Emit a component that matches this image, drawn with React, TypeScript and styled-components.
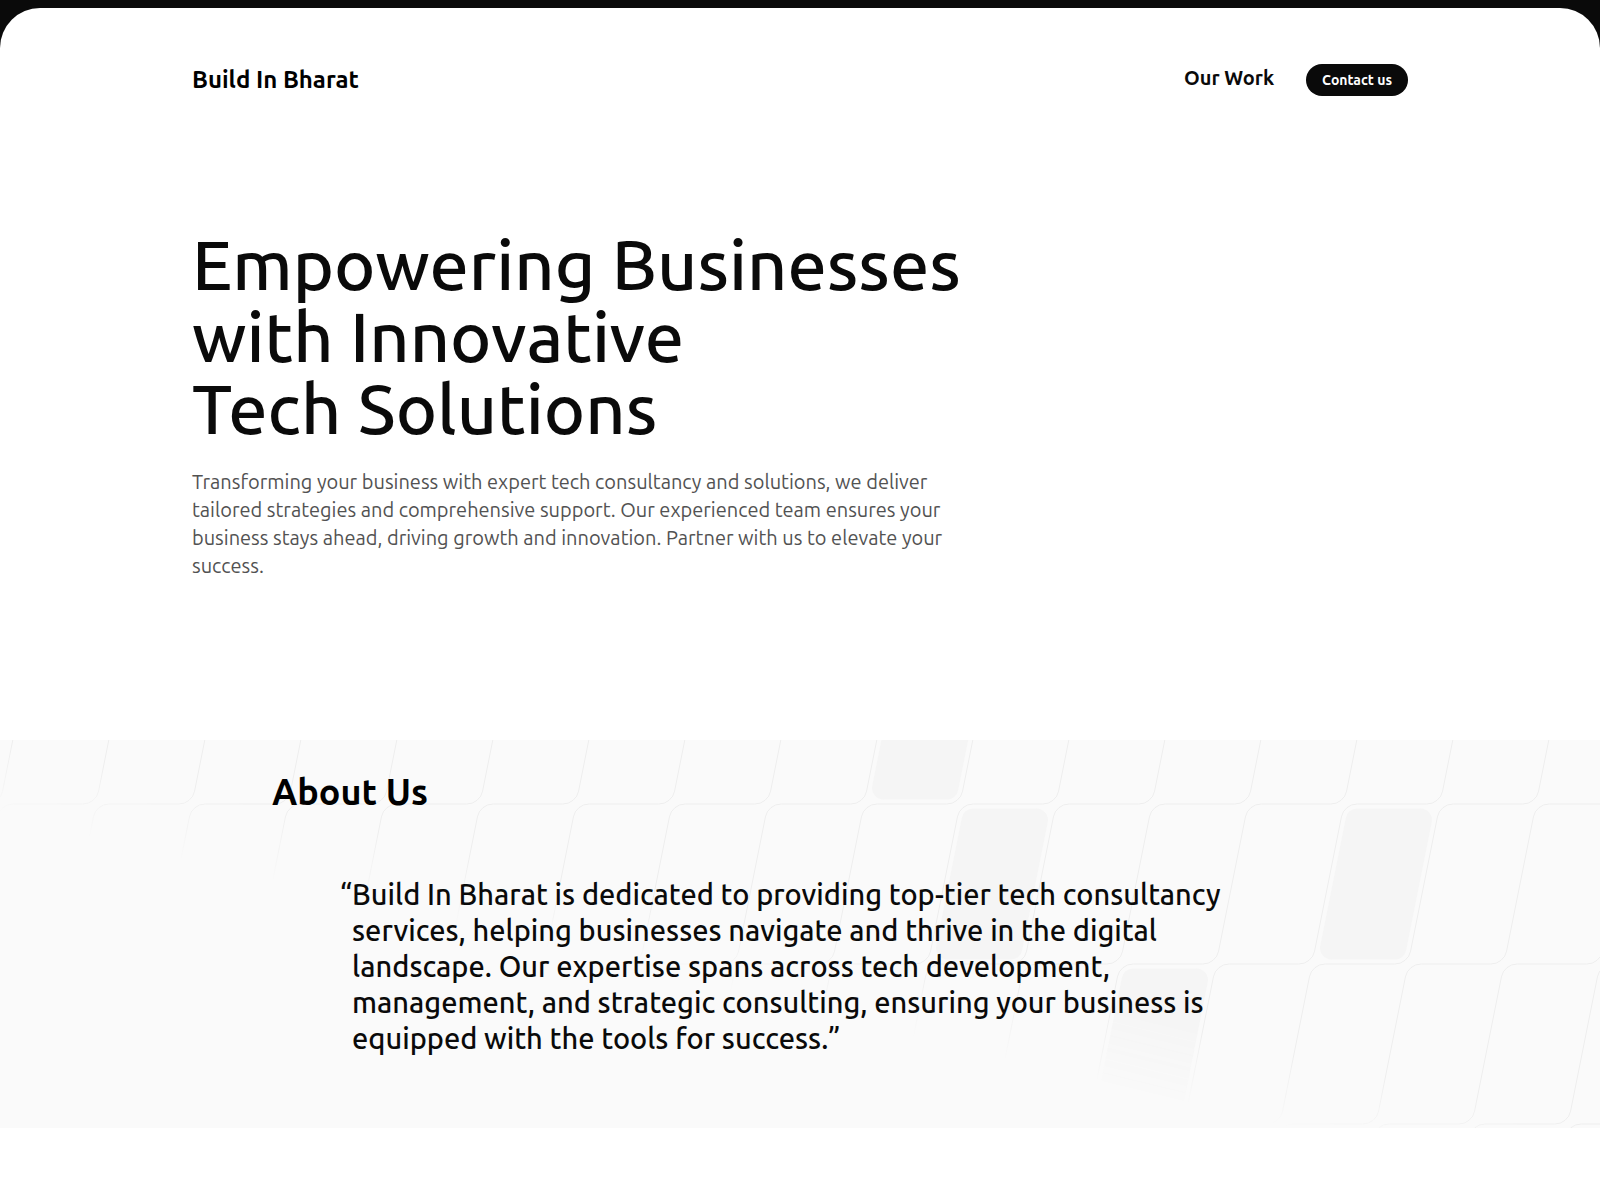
import React, { useId } from "react";
import styled, { createGlobalStyle } from "styled-components";

const GlobalStyle = createGlobalStyle`
  *, *::before, *::after { box-sizing: border-box; }
  body {
    margin: 0;
    background: #0a0a0a;
    color: #0a0a0a;
    font-family: Ubuntu, "Noto Sans", sans-serif;
  }
  h1, h2, p, figure, blockquote { margin: 0; }
`;

const Page = styled.div`
  display: flex;
  min-height: 100vh;
  padding-top: 8px;
`;

const Panel = styled.div`
  flex: 1;
  min-width: 0;
  padding: 56px 0 72px;
  background: #ffffff;
  border-radius: 40px 40px 0 0;
`;

const Container = styled.div`
  max-width: 1280px;
  margin: 0 auto;
  padding: 0 32px;
`;

const Header = styled.header`
  display: flex;
  align-items: center;
  justify-content: space-between;
`;

const Brand = styled.a`
  color: #000000;
  font-size: 24px;
  font-weight: 600;
  line-height: 32px;
  text-decoration: none;
`;

const Nav = styled.nav`
  display: flex;
  align-items: flex-start;
  gap: 32px;
`;

const NavLink = styled.a`
  color: #0a0a0a;
  font-size: 20px;
  font-weight: 600;
  line-height: 28px;
  text-decoration: none;
`;

const ContactButton = styled.button`
  height: 32px;
  padding: 0 16px;
  border: 0;
  border-radius: 16px;
  background: #0a0a0a;
  color: #ffffff;
  font-family: inherit;
  font-size: 14px;
  font-weight: 600;
  line-height: 20px;
  cursor: pointer;
`;

const Hero = styled.section`
  max-width: 768px;
  padding: 132px 0 160px;
`;

const HeroTitle = styled.h1`
  font-size: 70px;
  font-weight: 500;
  line-height: 72px;
  white-space: nowrap;
`;

const HeroText = styled.p`
  margin-top: 24px;
  color: #525252;
  font-size: 20px;
  font-weight: 400;
  line-height: 28px;
`;

const About = styled.section`
  position: relative;
  isolation: isolate;
  padding: 32px 0 72px;
  background: #fafafa;
`;

const Pattern = styled.svg`
  position: absolute;
  inset: 0;
  z-index: -1;
  width: 100%;
  height: 100%;
  fill: #f5f5f5;
  stroke: rgba(10, 10, 10, 0.05);
  mask-image: linear-gradient(to bottom left, white 50%, transparent 60%);
`;

const AboutInner = styled.div`
  max-width: 1120px;
  margin: 0 auto;
  padding: 0 32px;
`;

const AboutTitle = styled.h2`
  color: #000000;
  font-size: 36px;
  font-weight: 600;
  line-height: 40px;
`;

const Quote = styled.blockquote`
  max-width: 976px;
  margin-top: 64px;
  padding-left: 80px;
  font-size: 29px;
  font-weight: 500;
  line-height: 36px;

  p::before {
    content: "“";
    float: left;
    margin-left: -12px;
  }
  p::after { content: "”"; }
`;

const Line = styled.span`
  display: block;
`;

const CELL =
  "M114.883 0H45.117a16 16 0 0 0-15.69 12.862L2.573 147.138A16 16 0 0 1-13.117 160";
const BLOCK =
  "M45.119 4.5a11.5 11.5 0 0 0-11.277 9.245l-25.6 128C6.82 148.861 12.262 155.5 19.52 155.5h63.366a11.5 11.5 0 0 0 11.277-9.245l25.6-128c1.423-7.116-4.02-13.755-11.277-13.755H45.119Z";
const BLOCKS = [[1, 1], [2, 2], [4, 3], [6, 2], [7, 4], [5, 5]];
const ROWS = [-1, 0, 1, 2, 3];
const COLUMNS = [-1, 0, 1, 2];

const cellShift = (x: number, y: number) => `translate(${96 * x - 32 * y} ${160 * y})`;

function GridPattern({ yOffset }: { yOffset: number }) {
  const id = useId();
  return (
    <Pattern aria-hidden="true">
      <defs>
        <pattern
          id={id}
          width="96"
          height="480"
          x="50%"
          patternUnits="userSpaceOnUse"
          patternTransform={`translate(0 ${yOffset})`}
          fill="none"
        >
          {ROWS.map((y) =>
            COLUMNS.map((x) => <path key={`${x}-${y}`} d={CELL} transform={cellShift(x, y)} />)
          )}
        </pattern>
      </defs>
      <rect width="100%" height="100%" fill={`url(#${id})`} strokeWidth="0" />
      <svg x="50%" y={yOffset} strokeWidth="0" overflow="visible">
        {BLOCKS.map(([x, y]) => (
          <path key={`${x}-${y}`} d={BLOCK} transform={cellShift(x, y)} />
        ))}
      </svg>
    </Pattern>
  );
}

export default function App() {
  return (
    <>
      <GlobalStyle />
      <Page>
        <Panel>
          <Container>
            <Header>
              <Brand href="#home">Build In Bharat</Brand>
              <Nav>
                <NavLink href="#work">Our Work</NavLink>
                <ContactButton type="button">Contact us</ContactButton>
              </Nav>
            </Header>
            <Hero>
              <HeroTitle>
                <Line>Empowering Businesses</Line>
                <Line>with Innovative</Line>
                <Line>Tech Solutions</Line>
              </HeroTitle>
              <HeroText>
                Transforming your business with expert tech consultancy and solutions, we deliver
                tailored strategies and comprehensive support. Our experienced team ensures your
                business stays ahead, driving growth and innovation. Partner with us to elevate
                your success.
              </HeroText>
            </Hero>
          </Container>
          <About>
            <GridPattern yOffset={-256} />
            <AboutInner>
              <AboutTitle>About Us</AboutTitle>
              <Quote>
                <p>
                  Build In Bharat is dedicated to providing top-tier tech consultancy services,
                  helping businesses navigate and thrive in the digital landscape. Our expertise
                  spans across tech development, management, and strategic consulting, ensuring
                  your business is equipped with the tools for success.
                </p>
              </Quote>
            </AboutInner>
          </About>
        </Panel>
      </Page>
    </>
  );
}
